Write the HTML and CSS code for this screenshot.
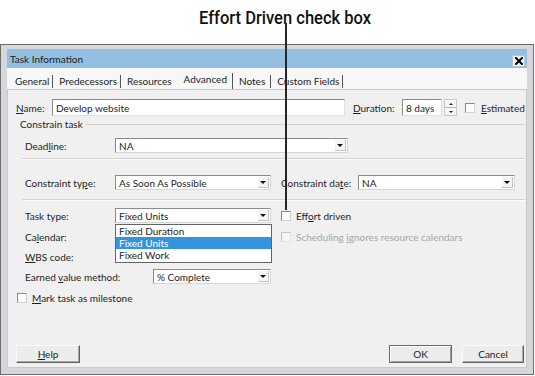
FILE: index.html
```html
<!DOCTYPE html>
<html>
<head>
<meta charset="utf-8">
<title>Task Information</title>
<link rel="stylesheet" href="styles.css">
</head>
<body>
<div class="stage">
  <div class="caption"><span class="caption-text">Effort Driven check box</span></div>
  <div class="pointer"></div>
  <div class="window">
    <div class="titlebar">
      <span class="title">Task Information</span>
      <span class="close"><svg width="8" height="8" viewBox="0 0 8 8"><path d="M1 1L7 7M7 1L1 7" stroke="#000" stroke-width="2" stroke-linecap="square"/></svg></span>
    </div>
    <div class="client">
      <div class="tabs">
        <span class="tab first sep">General</span>
        <span class="tab sep">Predecessors</span>
        <span class="tab">Resources</span>
        <span class="tab active sep">Advanced</span>
        <span class="tab notes sep">Notes</span>
        <span class="tab sep">Custom Fields</span>
      </div>
      <div class="panel">
        <div class="row name-row">
          <span class="lbl name-lbl"><u>N</u>ame:</span>
          <div class="field name-field">Develop website</div>
          <span class="lbl dur-lbl"><u>D</u>uration:</span>
          <div class="field dur-field">8 days</div>
          <div class="spinner"><span class="spin up"></span><span class="spin down"></span></div>
          <span class="check est-check"></span>
          <span class="lbl est-lbl"><u>E</u>stimated</span>
        </div>
        <div class="group-head"><span>Constrain task</span><span class="group-line"></span></div>
        <div class="row ind deadline-row">
          <span class="lbl col1">Dead<u>l</u>ine:</span>
          <div class="combo w-deadline"><span class="combo-text">NA</span><span class="arrow"></span></div>
        </div>
        <div class="sep-line first-sep"></div>
        <div class="row ind ctype-row">
          <span class="lbl col1">Constraint ty<u>p</u>e:</span>
          <div class="combo w-std"><span class="combo-text">As Soon As Possible</span><span class="arrow"></span></div>
          <span class="lbl cdate-lbl">Constraint da<u>t</u>e:</span>
          <div class="combo w-cdate"><span class="combo-text">NA</span><span class="arrow"></span></div>
        </div>
        <div class="sep-line second-sep"></div>
        <div class="row ind task-row">
          <span class="lbl col1">Task type:</span>
          <div class="combo w-std open">
            <span class="combo-text">Fixed Units</span><span class="arrow"></span>
            <ul class="listbox">
              <li>Fixed Duration</li>
              <li class="selected">Fixed Units</li>
              <li>Fixed Work</li>
            </ul>
          </div>
          <span class="check right-check"></span>
          <span class="lbl right-lbl">Eff<u>o</u>rt driven</span>
        </div>
        <div class="row ind cal-row">
          <span class="lbl col1">Ca<u>l</u>endar:</span>
          <span class="hidden-ctl"></span>
          <span class="check right-check disabled"></span>
          <span class="lbl right-lbl disabled-text">Scheduling <u>i</u>gnores resource calendars</span>
        </div>
        <div class="row ind wbs-row">
          <span class="lbl col1"><u>W</u>BS code:</span>
        </div>
        <div class="row ind ev-row">
          <span class="lbl col-ev">Earned <u>v</u>alue method:</span>
          <div class="combo w-ev"><span class="combo-text">% Complete</span><span class="arrow"></span></div>
        </div>
        <div class="row milestone-row">
          <span class="check"></span>
          <span class="lbl ms-lbl"><u>M</u>ark task as milestone</span>
        </div>
        <div class="buttons">
          <button class="btn"><u>H</u>elp</button>
          <span class="spacer"></span>
          <button class="btn default ok">OK</button>
          <button class="btn cancel">Cancel</button>
        </div>
      </div>
    </div>
  </div>
</div>
</body>
</html>
```
FILE: styles.css
```css
* { box-sizing: border-box; }
html, body { margin: 0; padding: 0; background: #fff; }
body {
  font-family: Lato, "Open Sans", sans-serif;
  font-size: 10px;
  color: #1e1e1e;
}
u { text-decoration: underline; text-underline-offset: 1px; }

.stage { position: relative; width: 535px; height: 376px; overflow: hidden; }

.caption {
  height: 44px;
  display: flex;
  justify-content: center;
  padding-top: 8px;
  padding-left: 35px;
}
.caption-text {
  display: inline-block;
  font-family: Roboto, "Liberation Sans", sans-serif;
  font-weight: 500;
  font-size: 17.5px;
  line-height: 20px;
  color: #111;
  transform: scaleX(0.945);
  white-space: nowrap;
}
.pointer {
  position: absolute;
  left: 285px;
  top: 23px;
  width: 2px;
  height: 187px;
  background: #262626;
  z-index: 5;
}

.window {
  width: 534px;
  height: 331px;
  border: 1px solid #6d6d6d;
  background: #d4d7db;
  padding: 4px 6px 6px;
  display: flex;
  flex-direction: column;
}
.titlebar {
  height: 19px;
  background: #93bfe2;
  display: flex;
  align-items: center;
  justify-content: space-between;
  padding: 0 2px 0 3px;
}
.title { font-size: 10px; color: #1b1b1b; }
.close {
  align-self: flex-end;
  margin-bottom: 1px;
  width: 13px;
  height: 12px;
  background: #f4f4f4;
  border: 1px solid #b7c6d3;
  display: flex;
  align-items: center;
  justify-content: center;
}

.client {
  flex: 1;
  background: #f7f7f7;
  display: flex;
  flex-direction: column;
}
.tabs {
  height: 21px;
  display: flex;
  align-items: flex-end;
  padding-left: 1px;
}
.tab {
  height: 13px;
  line-height: 13px;
  padding: 0 3px 0 6px;
  color: #222;
  margin-bottom: 1px;
  white-space: nowrap;
}
.tab.first { padding-left: 7px; }
.tab.sep { border-right: 1px solid #555; }
.tab.active {
  height: 16px;
  line-height: 13px;
  padding: 0 5px 2px 6px;
  margin-left: 3px;
  margin-bottom: 0;
}
.tab.notes { padding-right: 5px; }

.panel {
  flex: 1;
  border: 1px solid #c9c9c9;
  background: #f0f0f0;
  display: flex;
  flex-direction: column;
}
.row { display: flex; align-items: center; }
.lbl { white-space: nowrap; }

.name-row { margin-top: 9px; height: 17px; padding-left: 8px; }
.name-lbl { width: 36px; }
.field {
  height: 17px;
  background: #fff;
  border: 1px solid;
  border-color: #8b8b8b #e0e0e0 #e0e0e0 #8b8b8b;
  padding-left: 3px;
  display: flex;
  align-items: center;
}
.name-field { width: 293px; }
.dur-lbl { width: 49px; margin-left: 8px; }
.dur-field { width: 40px; }
.spinner {
  width: 13px;
  height: 17px;
  margin-left: 2px;
  border: 1px solid #c9c9c9;
  background: #f7f7f7;
  display: flex;
  flex-direction: column;
}
.spin { flex: 1; display: flex; align-items: center; justify-content: center; }
.spin.up { border-bottom: 1px solid #b5b5b5; }
.spin.up::after {
  content: "";
  border-left: 2px solid transparent;
  border-right: 2px solid transparent;
  border-bottom: 2px solid #222;
}
.spin.down::after {
  content: "";
  border-left: 2px solid transparent;
  border-right: 2px solid transparent;
  border-top: 2px solid #222;
}
.est-check { margin-left: 8px; }
.est-lbl { margin-left: 6px; }

.check {
  width: 10px;
  height: 10px;
  flex: none;
  border: 1px solid;
  border-color: #8a8a8a #d2d2d2 #d2d2d2 #8a8a8a;
  background: #fcfcfc;
}
.check.disabled { border-color: #c4c4c4 #e2e2e2 #e2e2e2 #c4c4c4; background: #f6f6f6; }

.group-head {
  margin-top: 2px;
  height: 12px;
  display: flex;
  align-items: center;
  padding-left: 12px;
  padding-right: 1px;
}
.group-line { flex: 1; height: 1px; background: #d2d2d2; margin-left: 3px; }

.ind { padding-left: 17px; height: 15px; }
.col1 { width: 90px; }
.col-ev { width: 128px; }

.combo {
  position: relative;
  height: 15px;
  background: #fff;
  border: 1px solid;
  border-color: #8b8b8b #d6d6d6 #d6d6d6 #8b8b8b;
  display: flex;
  align-items: center;
  padding-left: 3px;
}
.combo-text { flex: 1; white-space: nowrap; }
.arrow {
  width: 11px;
  height: 11px;
  margin-right: 1px;
  background: #f4f4f4;
  border-right: 1px solid #c4c4c4;
  border-bottom: 1px solid #c4c4c4;
  display: flex;
  align-items: center;
  justify-content: center;
}
.arrow::after {
  content: "";
  border-left: 3px solid transparent;
  border-right: 3px solid transparent;
  border-top: 3px solid #111;
}
.w-deadline { width: 233px; }
.w-std { width: 156px; }
.w-cdate { width: 157px; }
.w-ev { width: 118px; }
.cdate-lbl { margin-left: 10px; width: 77px; }

.deadline-row { margin-top: 8px; }
.sep-line {
  height: 2px;
  border-top: 1px solid #d4d4d4;
  border-bottom: 1px solid #fbfbfb;
  margin: 0 1px 0 14px;
}
.first-sep { margin-top: 5px; }
.ctype-row { margin-top: 15px; }
.second-sep { margin-top: 9px; }
.task-row { margin-top: 7px; }
.cal-row { margin-top: 6px; }
.wbs-row { margin-top: 5px; }
.ev-row { margin-top: 5px; }

.listbox {
  position: absolute;
  top: 15px;
  left: -1px;
  width: 157px;
  margin: 0;
  padding: 0 0 1px;
  list-style: none;
  background: #fff;
  border: 1px solid #646464;
  z-index: 3;
}
.listbox li {
  height: 12px;
  line-height: 12px;
  padding-left: 3px;
  white-space: nowrap;
}
.listbox li.selected { background: #3494df; color: #fff; }

.hidden-ctl { width: 156px; flex: none; }
.right-check { margin-left: 10px; }
.right-lbl { margin-left: 5px; }
.disabled-text { color: #a6a6a6; }

.milestone-row { margin-top: 8px; height: 12px; padding-left: 9px; }
.ms-lbl { margin-left: 5px; }

.buttons {
  margin-top: auto;
  margin-bottom: 4px;
  padding-left: 8px;
  margin-right: 2px;
  display: flex;
  align-items: center;
}
.spacer { flex: 1; }
.btn {
  height: 18px;
  width: 64px;
  padding: 0;
  font: inherit;
  color: #222;
  background: #ececec;
  border: 1px solid;
  border-color: #fafafa #606060 #606060 #fafafa;
  box-shadow: inset -1px -1px 0 #a9a9a9;
}
.btn.ok { width: 63px; border-color: #6a6a6a; box-shadow: inset 1px 1px 0 #fff, inset -1px -1px 0 #9c9c9c; }
.btn.cancel { width: 62px; margin-left: 10px; }
```
